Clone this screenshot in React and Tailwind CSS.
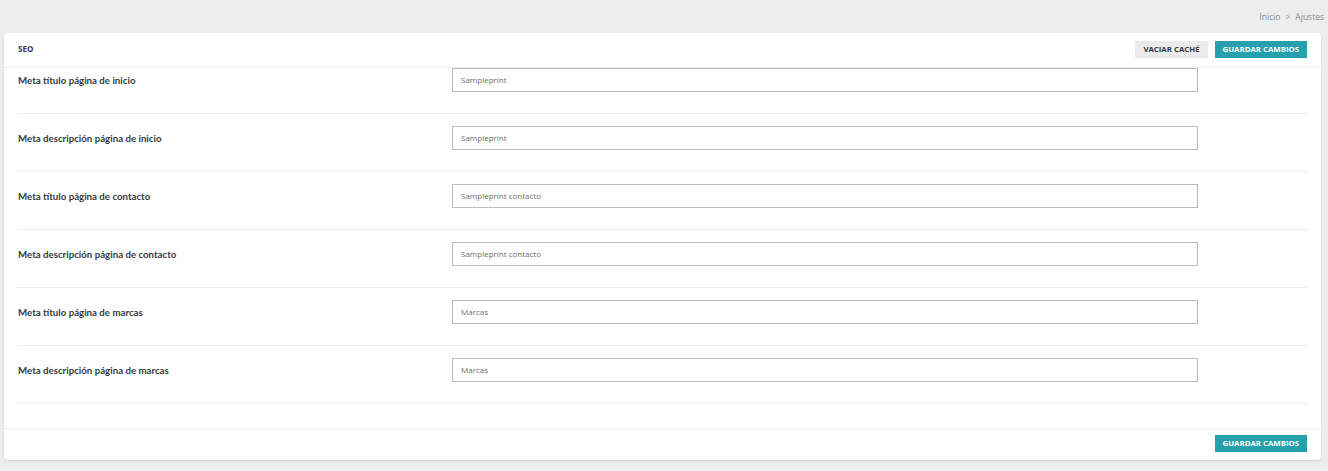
import React from 'react';

const fields = [
  { label: 'Meta título página de inicio', value: 'Sampleprint' },
  { label: 'Meta descripción página de inicio', value: 'Sampleprint' },
  { label: 'Meta título página de contacto', value: 'Sampleprint contacto' },
  { label: 'Meta descripción página de contacto', value: 'Sampleprint contacto' },
  { label: 'Meta título página de marcas', value: 'Marcas' },
  { label: 'Meta descripción página de marcas', value: 'Marcas' },
];

const btn = "h-[17px] px-[8px] text-[7.8px] font-bold uppercase leading-none flex items-center";

export default function App() {
  return (
    <div className="min-h-[471px] bg-[#ededed] pt-[12px] pb-[12px] pl-[4px] pr-[7px]" style={{ fontFamily: '"Open Sans", sans-serif' }}>
      <div className="flex justify-end items-center gap-[5px] text-[8.5px] text-[#8b8b8b] -mr-[3px] h-[10px] mb-[11px]">
        <span>Inicio</span>
        <span>&gt;</span>
        <span>Ajustes</span>
      </div>

      <div className="bg-white rounded-[4px] shadow-[0_1px_2px_rgba(0,0,0,0.12)]">
        <div className="flex items-start justify-between h-[35px] border-b border-[#ececec] pl-[14px] pr-[14px] pt-[8px]">
          <span className="text-[8px] font-bold text-[#363a41] mt-[2px]">SEO</span>
          <div className="flex gap-[7px]">
            <button className={`${btn} bg-[#ebebeb] text-[#363a41]`}>Vaciar caché</button>
            <button className={`${btn} bg-[#25a0ac] text-white`}>Guardar cambios</button>
          </div>
        </div>

        <div className="px-[13px] pb-[24px]">
          {fields.map((f, i) => (
            <div key={f.label} className={`flex items-start border-b border-[#ececec] pb-[21px] ${i === 0 ? 'pt-0' : 'pt-[12px]'}`}>
              <div className="w-[435px] pl-[1px] h-[24px] flex items-center text-[9.7px] font-bold text-[#363a41]" style={{ fontFamily: 'Lato, sans-serif' }}>
                {f.label}
              </div>
              <div className="w-[746px] h-[24px] border border-[#bbbbbb] flex items-center pl-[8px] text-[8px] text-[#6c6c6c]">
                {f.value}
              </div>
            </div>
          ))}
        </div>

        <div className="border-t border-[#ececec] flex justify-end pt-[6px] pb-[8px] pr-[14px]">
          <button className={`${btn} bg-[#25a0ac] text-white`}>Guardar cambios</button>
        </div>
      </div>
    </div>
  );
}
